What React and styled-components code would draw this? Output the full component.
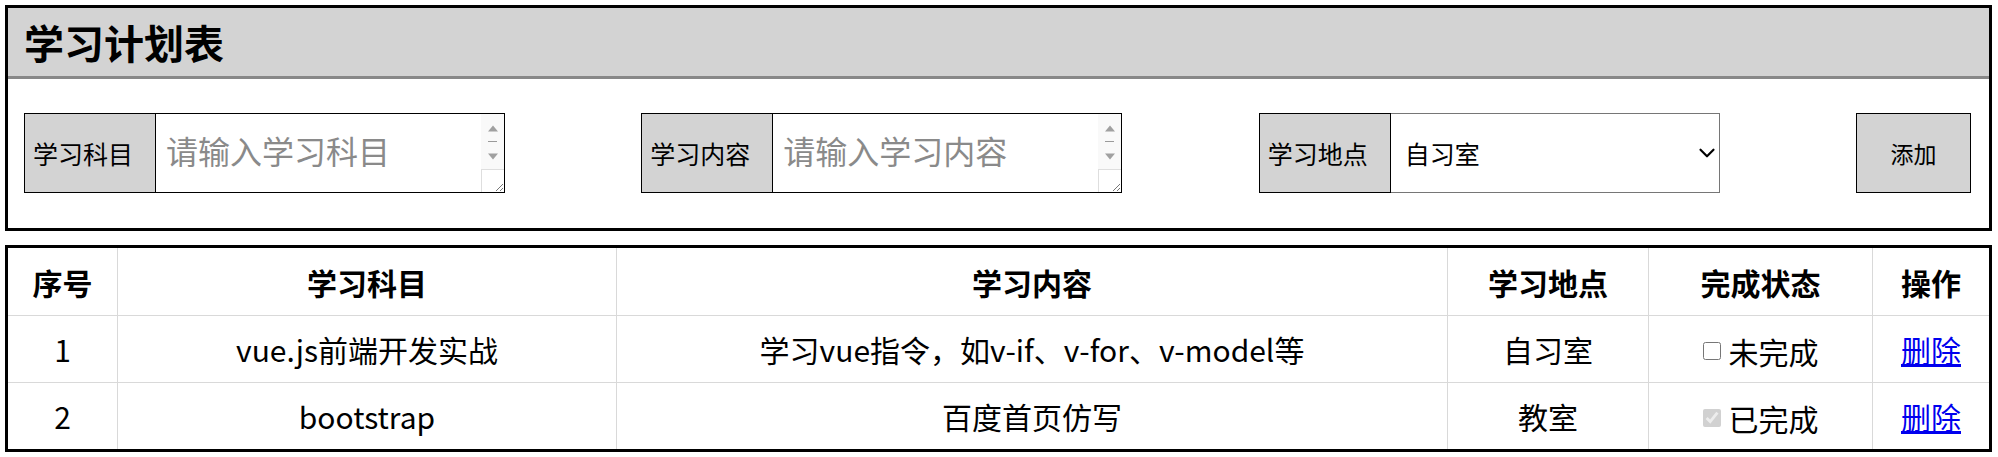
import React from 'react'
import styled, { createGlobalStyle } from 'styled-components'
import { ChevronDown } from 'lucide-react'

const GlobalStyle = createGlobalStyle`
  body {
    margin: 0;
    font-family: "Noto Sans CJK SC", "Noto Sans", sans-serif;
    color: #000;
    background: #fff;
  }
`

const Page = styled.div`
  padding: 5px 6px 5px 5px;
`

const Panel = styled.div`
  border: 3px solid #000;
`

const Header = styled.div`
  height: 68px;
  background-color: #d3d3d3;
  border-bottom: 3px solid #888;
  display: flex;
  align-items: center;
  padding-left: 16px;
`

const Title = styled.h2`
  margin: 0;
  font-size: 40px;
  font-weight: bold;
  line-height: 1;
`

const FormRow = styled.div`
  display: flex;
  justify-content: space-between;
  align-items: center;
  padding: 34px 18px 35px 16px;
`

const Field = styled.div`
  display: flex;
  height: 80px;
`

const FieldLabel = styled.span`
  width: 132px;
  box-sizing: border-box;
  background-color: #d3d3d3;
  border: 1px solid #000;
  display: flex;
  align-items: center;
  padding-left: 8px;
  font-size: 25px;
`

const InputBox = styled.div`
  width: 349px;
  box-sizing: border-box;
  border: 1px solid #000;
  border-left: none;
  display: flex;
  background: #fff;
`

const TextArea = styled.textarea`
  flex: 1;
  min-width: 0;
  border: none;
  padding: 14px 10px 6px;
  font-family: inherit;
  font-size: 32px;
  line-height: 1.4;
  resize: none;
  outline: none;
  overflow: hidden;

  &::placeholder {
    color: #8a8a8a;
  }
`

const ScrollRail = styled.div`
  width: 23px;
  display: flex;
  flex-direction: column;
  align-items: center;
  padding-top: 4px;
  background: #f9f9f9;
`

const RailButton = styled.div`
  height: 20px;
  width: 100%;
  display: flex;
  align-items: center;
  justify-content: center;
`

const RailThumb = styled.div`
  width: 9px;
  height: 1px;
  background: #9a9a9a;
  margin: 3px 0 4px;
`

const ResizeCorner = styled.div`
  margin-top: auto;
  width: 100%;
  height: 23px;
  box-sizing: border-box;
  border-top: 1px solid #dedede;
  border-left: 1px solid #dedede;
  background: #fff;
  display: flex;
  align-items: flex-end;
  justify-content: flex-end;
`

const SelectBox = styled.div`
  position: relative;
  display: flex;
`

const Select = styled.select`
  appearance: none;
  width: 329px;
  height: 80px;
  box-sizing: border-box;
  border: 1px solid #767676;
  border-left: none;
  border-radius: 0;
  background: #fff;
  padding-left: 14px;
  font-family: inherit;
  font-size: 25px;
  color: #000;
`

const SelectArrow = styled.span`
  position: absolute;
  right: 0;
  top: 50%;
  transform: translateY(-50%);
  display: flex;
  pointer-events: none;
`

const AddButton = styled.button`
  width: 115px;
  height: 80px;
  background-color: #d3d3d3;
  border: 1px solid #000;
  font-family: inherit;
  font-size: 23px;
  color: #000;
  cursor: pointer;
`

const Table = styled.table`
  margin-top: 14px;
  width: 100%;
  border-collapse: collapse;
  table-layout: fixed;
  border: 3px solid #000;
  font-size: 30px;
  text-align: center;
`

const Th = styled.th`
  height: 67px;
  border: 1px solid #d9d9d9;
  font-weight: bold;
  padding: 0;
`

const Td = styled.td`
  height: 66px;
  border: 1px solid #d9d9d9;
  padding: 0;
`

const Status = styled.label`
  display: inline-flex;
  align-items: center;
  gap: 8px;
`

const Check = styled.input`
  width: 18px;
  height: 18px;
  margin: 0;
`

const DeleteLink = styled.a`
  color: #0000ee;
  text-decoration: underline;
`

const Arrow = ({ down }) => (
  <svg width="10" height="7" viewBox="0 0 10 7">
    <path d={down ? 'M0 0.5 L10 0.5 L5 6.5 Z' : 'M0 6.5 L10 6.5 L5 0.5 Z'} fill="#a0a0a0" />
  </svg>
)

const Grip = () => (
  <svg width="10" height="10" viewBox="0 0 10 10">
    <path d="M9 2 L2 9 M9 6 L6 9" stroke="#777" strokeWidth="1" fill="none" />
  </svg>
)

const TextField = ({ label, placeholder }) => (
  <Field>
    <FieldLabel>{label}</FieldLabel>
    <InputBox>
      <TextArea placeholder={placeholder} />
      <ScrollRail>
        <RailButton><Arrow /></RailButton>
        <RailThumb />
        <RailButton><Arrow down /></RailButton>
        <ResizeCorner><Grip /></ResizeCorner>
      </ScrollRail>
    </InputBox>
  </Field>
)

const columns = [
  { title: '序号', width: 111 },
  { title: '学习科目', width: 499 },
  { title: '学习内容', width: 831 },
  { title: '学习地点', width: 201 },
  { title: '完成状态', width: 224 },
  { title: '操作' },
]

const plans = [
  { id: 1, subject: 'vue.js前端开发实战', content: '学习vue指令，如v-if、v-for、v-model等', place: '自习室', done: false },
  { id: 2, subject: 'bootstrap', content: '百度首页仿写', place: '教室', done: true },
]

const App = () => {
  return (
    <Page>
      <GlobalStyle />
      <Panel>
        <Header>
          <Title>学习计划表</Title>
        </Header>
        <FormRow>
          <TextField label="学习科目" placeholder="请输入学习科目" />
          <TextField label="学习内容" placeholder="请输入学习内容" />
          <Field>
            <FieldLabel>学习地点</FieldLabel>
            <SelectBox>
              <Select defaultValue="自习室">
                <option>自习室</option>
                <option>教室</option>
                <option>宿舍</option>
              </Select>
              <SelectArrow>
                <ChevronDown size={26} strokeWidth={2} color="#000" />
              </SelectArrow>
            </SelectBox>
          </Field>
          <AddButton>添加</AddButton>
        </FormRow>
      </Panel>

      <Table>
        <colgroup>
          {columns.map((c) => (
            <col key={c.title} style={c.width ? { width: c.width } : undefined} />
          ))}
        </colgroup>
        <thead>
          <tr>
            {columns.map((c) => (
              <Th key={c.title}>{c.title}</Th>
            ))}
          </tr>
        </thead>
        <tbody>
          {plans.map((p) => (
            <tr key={p.id}>
              <Td>{p.id}</Td>
              <Td>{p.subject}</Td>
              <Td>{p.content}</Td>
              <Td>{p.place}</Td>
              <Td>
                <Status>
                  <Check type="checkbox" checked={p.done} disabled={p.done} onChange={() => {}} />
                  {p.done ? '已完成' : '未完成'}
                </Status>
              </Td>
              <Td>
                <DeleteLink href="#">删除</DeleteLink>
              </Td>
            </tr>
          ))}
        </tbody>
      </Table>
    </Page>
  )
}

export default App
